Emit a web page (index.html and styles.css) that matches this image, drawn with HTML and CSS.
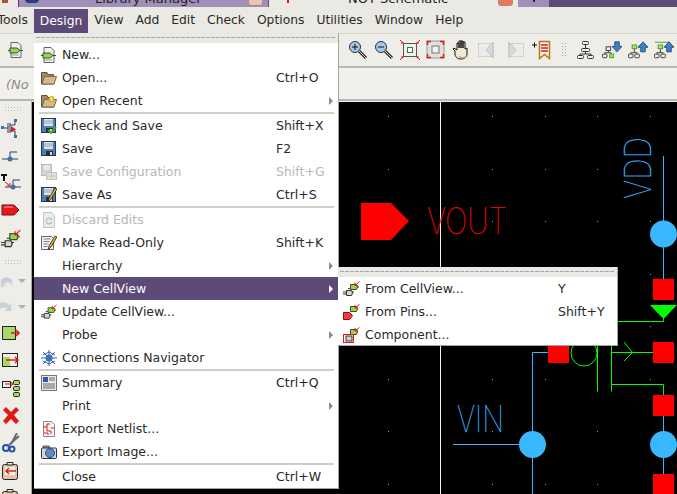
FILE: index.html
```html
<!DOCTYPE html>
<html lang="en">
<head>
    <meta charset="UTF-8">
    <meta name="viewport" content="width=device-width, initial-scale=1.0">
    <title>NOT Schematic</title>
    <link rel="stylesheet" href="styles.css">
</head>
<body>

<!-- Icon set -->
<svg class="icon-defs" width="0" height="0">
    <defs>
        <symbol id="i-cell" viewBox="0 0 16 16">
            <path d="M3 .5h7l3 3v12H3z" fill="#f2f2ee" stroke="#666"/>
            <path d="M2 6h7l3 2.5-3 2.5H2z" fill="#9ccf5c" stroke="#35581c"/>
            <path d="M0 8.500h2M12 8.500h3" stroke="#35581c"/>
            <path d="M3 13h8" stroke="#999"/>
        </symbol>
        <symbol id="i-folder" viewBox="0 0 16 16">
            <path d="M.5 2.500V14h12V4.500H7l-1-2z" fill="#a8875a" stroke="#5c5040"/>
            <path d="M1 14l2.500-7.500h12L13 14z" fill="#d8b98c" stroke="#7a6648"/>
        </symbol>
        <symbol id="i-folder-recent" viewBox="0 0 16 16">
            <use href="#i-folder"/>
            <circle cx="10.500" cy="6" r="2.500" fill="#f6e64a" stroke="#b8a020"/>
        </symbol>
        <symbol id="i-save" viewBox="0 0 16 16">
            <rect x=".5" y=".5" width="14" height="14" fill="#4f7fb8" stroke="#1f3a5c"/>
            <rect x="3" y="1" width="9" height="7" fill="#dfe3e6"/>
            <path d="M3 3h9M3 5h9" stroke="#9aa4ac"/>
            <rect x="5" y="10" width="7" height="5" fill="#2c2c2c"/>
            <rect x="9" y="11" width="2" height="3" fill="#ddd"/>
        </symbol>
        <symbol id="i-save-check" viewBox="0 0 16 16">
            <use href="#i-save"/>
            <path d="M7 12l3 3 5-6" fill="none" stroke="#3ea82c" stroke-width="2"/>
        </symbol>
        <symbol id="i-save-off" viewBox="0 0 16 16">
            <rect x=".5" y=".5" width="10" height="11" fill="#cfd4d8" stroke="#b4b8bc"/>
            <rect x="3" y="1" width="6" height="5" fill="#e8e8e8"/>
            <rect x="5.500" y="8.500" width="10" height="7" fill="#e6e4dc" stroke="#c4c2ba"/>
            <path d="M5.500 12h10M10.500 8.500v7" stroke="#c4c2ba"/>
        </symbol>
        <symbol id="i-save-as" viewBox="0 0 16 16">
            <use href="#i-save"/>
            <path d="M7 15l1-4 6-10 2 1-6 10z" fill="#f0b020" stroke="#222" stroke-width=".8"/>
        </symbol>
        <symbol id="i-discard" viewBox="0 0 16 16">
            <path d="M2.500.5h8l3 3v12h-11z" fill="#ecece8" stroke="#c4c4c0"/>
            <path d="M5 9a3 3 0 0 1 5-2l1 1M11 10a3 3 0 0 1-5 1l-1-1" fill="none" stroke="#a9bccc" stroke-width="1.200"/>
        </symbol>
        <symbol id="i-readonly" viewBox="0 0 16 16">
            <path d="M.5 1.500h10l2 2v11H.5z" fill="#f4f4f2" stroke="#667"/>
            <path d="M2.500 4h7M2.500 6.500h6M2.500 9h5M2.500 11.500h4" stroke="#6d84a8"/>
            <path d="M7 15l1-4 6-10 2 1-6 10z" fill="#f0b020" stroke="#222" stroke-width=".8"/>
        </symbol>
        <symbol id="i-plug" viewBox="0 0 17 16">
            <path d="M7.500 3.500h6l1 2.500-1 2.500h-6z" fill="#9ccf5c" stroke="#35581c"/>
            <path d="M14 6h2M5 7.500h2.500" stroke="#35581c"/>
            <path d="M3.500 9.500h5l1 2.500-1 2.500h-5z" fill="#d4d4d4" stroke="#333"/>
            <path d="M0 11h3.500M0 13h3.500M9 11h2" stroke="#333"/>
            <path d="M16.500.5l-4 3.500M12 1.500v3h3" fill="none" stroke="#e01818"/>
        </symbol>
        <symbol id="i-plug-pin" viewBox="0 0 17 16">
            <path d="M7.500 2.500h6l1 2.500-1 2.500h-6z" fill="#9ccf5c" stroke="#35581c"/>
            <path d="M16.500.5l-4 3M12 1v3h3" fill="none" stroke="#e01818"/>
            <path d="M.5 8.500h6l3 3-3 4h-6z" fill="#e84040" stroke="#a00"/>
        </symbol>
        <symbol id="i-plug-box" viewBox="0 0 17 16">
            <path d="M7.500 2.500h6l1 2.500-1 2.500h-6z" fill="#9ccf5c" stroke="#35581c"/>
            <path d="M16.500.5l-4 3M12 1v3h3" fill="none" stroke="#e01818"/>
            <rect x="3" y="9" width="6" height="5" fill="#d4d4d4" stroke="#333"/>
            <rect x=".5" y="7.500" width="10" height="8" fill="none" stroke="#e01818"/>
        </symbol>
        <symbol id="i-nav" viewBox="0 0 16 16">
            <path d="M8 0v16M0 8h16M2 2l12 12M14 2L2 14M2 5l6-3 6 3M2 11l6 3 6-3" fill="none" stroke="#3a5f9c"/>
            <circle cx="8" cy="8" r="3.500" fill="#3f6fc0"/>
        </symbol>
        <symbol id="i-summary" viewBox="0 0 16 16">
            <rect x=".5" y=".5" width="15" height="15" fill="#e8e8e4" stroke="#777"/>
            <rect x="2" y="2" width="5" height="5" fill="#2c5aa8"/>
            <path d="M8 3h6M8 5h6M2 9h12M2 11h12M2 13h12" stroke="#667"/>
        </symbol>
        <symbol id="i-netlist" viewBox="0 0 16 16">
            <path d="M2.500.5h8l3 3v12h-11z" fill="#f4f4f2" stroke="#888"/>
            <path d="M2 6h4V3h3M6 6v4h4M3 12h4v2M10 7h3M10 10v3" fill="none" stroke="#d82020"/>
        </symbol>
        <symbol id="i-camera" viewBox="0 0 16 16">
            <path d="M2 2h6l1 2H2z" fill="#aaa" stroke="#555"/>
            <rect x=".5" y="4" width="15" height="10.500" rx="1" fill="#d4d8dc" stroke="#333"/>
            <circle cx="9" cy="9" r="4.500" fill="#5c8cc8" stroke="#2c4a78"/>
        </symbol>
        <symbol id="i-zoom-in" viewBox="0 0 20 20">
            <path d="M11 11l7 7" stroke="#222" stroke-width="3"/>
            <path d="M11 11l7 7" stroke="#ddd"/>
            <circle cx="7" cy="7" r="5.500" fill="#a8c8e8" stroke="#234"/>
            <path d="M4 7h6M7 4v6" stroke="#111"/>
        </symbol>
        <symbol id="i-zoom-out" viewBox="0 0 20 20">
            <path d="M11 11l7 7" stroke="#222" stroke-width="3"/>
            <path d="M11 11l7 7" stroke="#ddd"/>
            <circle cx="7" cy="7" r="5.500" fill="#a8c8e8" stroke="#234"/>
            <path d="M4 7h6" stroke="#111"/>
        </symbol>
        <symbol id="i-fit" viewBox="0 0 20 20">
            <rect x="3.500" y="3.500" width="13" height="13" fill="#eee" stroke="#555"/>
            <rect x="7.500" y="7.500" width="5" height="5" fill="#fff" stroke="#3a7a1c"/>
            <path d="M0 0l4 4M20 0l-4 4M0 20l4-4M20 20l-4-4M1 3h3M16 3h3M1 17h3M16 17h3" stroke="#e01818"/>
        </symbol>
        <symbol id="i-fit-all" viewBox="0 0 20 20">
            <rect x="1" y="1" width="17" height="17" fill="#e0e0dc" stroke="#999"/>
            <rect x="6" y="6" width="7" height="7" fill="#f4f4f4" stroke="#777"/>
            <path d="M1.500 5V1.500H5M14 1.500h3.500V5M1.500 14v3.500H5M14 17.500h3.500V14" fill="none" stroke="#e01818" stroke-width="1.500"/>
        </symbol>
        <symbol id="i-hand" viewBox="0 0 20 20">
            <path d="M3 11l-2-2 1-1 3 2V3h2v5V1h2v7V1h2v7V2h2v7l2-1v5c0 4-2 6-6 6s-5-2-6-4z" fill="#f2ead8" stroke="#111"/>
            <path d="M6 15c3 3 7 3 10-1v2c-2 3-6 3-8 2z" fill="#b89c80"/>
        </symbol>
        <symbol id="i-prev" viewBox="0 0 20 20">
            <rect x=".5" y="3.500" width="15" height="13" fill="#ececea" stroke="#c4c4c0" stroke-dasharray="2 1"/>
            <path d="M8 10l7-8v16z" fill="#d4dae0" stroke="#c4c4c0"/>
        </symbol>
        <symbol id="i-next" viewBox="0 0 20 20">
            <rect x="4.500" y="3.500" width="15" height="13" fill="#ececea" stroke="#c4c4c0" stroke-dasharray="2 1"/>
            <path d="M12 10L5 2v16z" fill="#d4dae0" stroke="#c4c4c0"/>
        </symbol>
        <symbol id="i-bookmark" viewBox="0 0 20 20">
            <path d="M0 5h5M2.500 2.500v5" stroke="#111"/>
            <path d="M7.500 1.500h10v17l-5-4-5 4z" fill="#f4f0e8" stroke="#b87818" stroke-width="1.500"/>
            <path d="M9 5h7M9 8h7M9 11h7" stroke="#d82020" stroke-width="1.500"/>
        </symbol>
        <symbol id="i-hier" viewBox="0 0 20 20">
            <rect x="6.500" y="1.500" width="6" height="3" rx="1" fill="#eee" stroke="#333"/>
            <rect x="5.500" y="8.500" width="8" height="3" rx="1" fill="#eee" stroke="#333"/>
            <rect x="1.500" y="15.500" width="6" height="3" rx="1" fill="#eee" stroke="#333"/>
            <rect x="11.500" y="15.500" width="6" height="3" rx="1" fill="#eee" stroke="#333"/>
            <path d="M9.500 5v3M9.500 12v2M4 15v-1h11v1" fill="none" stroke="#333"/>
        </symbol>
        <symbol id="i-hier-down" viewBox="0 0 22 20">
            <rect x="4.500" y="6.500" width="5" height="4" fill="#eee" stroke="#333"/>
            <rect x=".5" y="14.500" width="5" height="4" rx="1" fill="#eee" stroke="#333"/>
            <rect x="8.500" y="14.500" width="4" height="4" fill="#b8e070" stroke="#4a9a1c"/>
            <path d="M7 11v2H3v1M7 13h3v1" fill="none" stroke="#333"/>
            <path d="M14 1h5v5h3l-5.500 6L11 6h3z" fill="#3f80c8" stroke="#1f4a7c"/>
        </symbol>
        <symbol id="i-hier-up" viewBox="0 0 22 20">
            <rect x="4.500" y="4.500" width="5" height="4" fill="#b8e070" stroke="#4a9a1c"/>
            <rect x=".5" y="14.500" width="5" height="4" rx="1" fill="#eee" stroke="#333"/>
            <rect x="7.500" y="14.500" width="5" height="4" rx="1" fill="#eee" stroke="#333"/>
            <path d="M7 9v4H3v1M7 13h3v1" fill="none" stroke="#333"/>
            <path d="M14 12h5V7h3L16.500 1 11 7h3z" fill="#3f80c8" stroke="#1f4a7c"/>
        </symbol>
        <symbol id="i-hier-top" viewBox="0 0 22 20">
            <path d="M1 1.500h16" stroke="#4a9a1c"/>
            <use href="#i-hier-up"/>
        </symbol>
        <symbol id="i-mos" viewBox="0 0 20 20">
            <path d="M1 9h6M7 4v10M9 4v10M9 6h5V1M9 12h5v5" fill="none" stroke="#23406c"/>
            <rect x="0" y="7" width="3" height="3" fill="#3f6fb0"/>
            <rect x="13" y="0" width="3" height="3" fill="#3f6fb0"/>
            <rect x="13" y="16" width="3" height="3" fill="#3f6fb0"/>
            <path d="M10 7l5 3.500-5 2.500z" fill="#e01818"/>
        </symbol>
        <symbol id="i-net" viewBox="0 0 20 20">
            <path d="M1 13h16M9 13V6h7" fill="none" stroke="#23406c"/>
            <circle cx="9" cy="13" r="2.500" fill="#3f6fb0"/>
        </symbol>
        <symbol id="i-net-label" viewBox="0 0 20 20">
            <path d="M4 13h16M12 13V6h7" fill="none" stroke="#23406c"/>
            <circle cx="12" cy="13" r="2.500" fill="#3f6fb0"/>
            <path d="M0 0h6v2H4v5H2V2H0z" fill="#111"/>
            <path d="M4 8l5 4M6 12h3V9" fill="none" stroke="#e01818"/>
        </symbol>
        <symbol id="i-pin" viewBox="0 0 20 20">
            <path d="M1 4h12l5 5-5 5H1z" fill="#e81818" stroke="#7a0c0c"/>
            <path d="M3 6h9" stroke="#f4a8a8"/>
        </symbol>
        <symbol id="i-undo" viewBox="0 0 16 16">
            <path d="M1 9c0-6 9-8 14-2v7c-3-6-8-5-10-2l3 1-7 3z" fill="#c8d0d8"/>
        </symbol>
        <symbol id="i-redo" viewBox="0 0 16 16">
            <path d="M0 3c5-2 10 0 11 3l3-2v9H6l3-3C7 8 3 8 0 10z" fill="#c8d0d8"/>
        </symbol>
        <symbol id="i-bus-out" viewBox="0 0 20 20">
            <rect x="1.500" y="3.500" width="13" height="13" fill="#a8d868" stroke="#222"/>
            <path d="M10 10h8M15 7l3 3-3 3" fill="none" stroke="#e01818" stroke-width="1.500"/>
        </symbol>
        <symbol id="i-bus-mid" viewBox="0 0 20 20">
            <rect x="1.500" y="2.500" width="15" height="13" fill="#f0f0e8" stroke="#222"/>
            <rect x="2" y="6" width="7" height="9" fill="#a8d868"/>
            <path d="M5 9h12M14 6l3 3-3 3" fill="none" stroke="#e01818" stroke-width="1.500"/>
        </symbol>
        <symbol id="i-tree" viewBox="0 0 20 20">
            <rect x="1.500" y="3.500" width="8" height="6" fill="#eee" stroke="#222"/>
            <rect x="12.500" y="2.500" width="6" height="4" rx="1" fill="#a8d868" stroke="#222"/>
            <rect x="12.500" y="8.500" width="6" height="4" rx="1" fill="#a8d868" stroke="#222"/>
            <rect x="12.500" y="14.500" width="6" height="4" rx="1" fill="#a8d868" stroke="#222"/>
            <path d="M4 6h7M9 3l3 3-3 3" fill="none" stroke="#e01818"/>
        </symbol>
        <symbol id="i-delete" viewBox="0 0 20 20">
            <path d="M2 4l3-3 5 5 5-5 3 3-5 5 5 6-3 3-5-5-5 5-3-3 5-6z" fill="#e01818"/>
        </symbol>
        <symbol id="i-cut" viewBox="0 0 20 20">
            <path d="M16 0l-6 11M18 3L8 12" stroke="#667" stroke-width="2"/>
            <circle cx="5" cy="15" r="3" fill="none" stroke="#2452a8" stroke-width="2"/>
            <circle cx="11" cy="16" r="2.500" fill="none" stroke="#2452a8" stroke-width="2"/>
        </symbol>
        <symbol id="i-paste" viewBox="0 0 20 20">
            <rect x="1.500" y="3.500" width="15" height="15" rx="2" fill="#e4c4a4" stroke="#222"/>
            <path d="M6 4V1.500h6V4z" fill="#eee" stroke="#222"/>
            <rect x="4" y="6" width="10" height="8" fill="#f4f4f0"/>
            <path d="M15 10H5M8 7l-3 3 3 3" fill="none" stroke="#e01818" stroke-width="1.500"/>
        </symbol>
    </defs>
</svg>

<!-- Window tabs behind the schematic window -->
<div class="task-strip">
    <div class="task task-first"><span class="task-mark"></span></div>
    <div class="task task-library">
        <span class="task-logo"></span>
        <span class="task-text">Library Manager</span>
        <span class="task-close"></span>
    </div>
    <div class="task task-schematic">
        <span class="task-tick"></span>
        <span class="task-text">NOT Schematic</span>
        <span class="task-close"></span>
    </div>
    <div class="task task-pager"><span class="task-pin"></span></div>
    <div class="task task-rest"></div>
</div>

<div class="menubar">
    <span class="menubar-item menubar-first">Tools</span>
    <span class="menubar-item menubar-open">Design</span>
    <span class="menubar-item">View</span>
    <span class="menubar-item">Add</span>
    <span class="menubar-item">Edit</span>
    <span class="menubar-item">Check</span>
    <span class="menubar-item">Options</span>
    <span class="menubar-item">Utilities</span>
    <span class="menubar-item">Window</span>
    <span class="menubar-item">Help</span>
</div>

<div class="toolbar">
    <svg class="tb-first"><use href="#i-cell"/></svg>
    <div class="tb-group">
        <span class="tb-btn"><svg><use href="#i-zoom-in"/></svg></span>
        <span class="tb-btn"><svg><use href="#i-zoom-out"/></svg></span>
        <span class="tb-btn"><svg><use href="#i-fit"/></svg></span>
        <span class="tb-btn"><svg><use href="#i-fit-all"/></svg></span>
        <span class="tb-btn"><svg><use href="#i-hand"/></svg></span>
        <span class="tb-btn"><svg><use href="#i-prev"/></svg></span>
        <span class="tb-btn"><svg><use href="#i-next"/></svg></span>
        <span class="tb-btn tb-bookmark"><svg><use href="#i-bookmark"/></svg></span>
        <span class="tb-sep"></span>
        <span class="tb-btn"><svg><use href="#i-hier"/></svg></span>
        <span class="tb-btn"><svg><use href="#i-hier-down"/></svg></span>
        <span class="tb-btn"><svg><use href="#i-hier-up"/></svg></span>
        <span class="tb-btn"><svg><use href="#i-hier-top"/></svg></span>
    </div>
</div>

<div class="infobar"><em>(No</em></div>

<div class="main">
    <div class="sidebar">
        <div class="grip"></div>
        <span class="tool"><svg><use href="#i-mos"/></svg></span>
        <span class="tool"><svg><use href="#i-net"/></svg></span>
        <span class="tool"><svg><use href="#i-net-label"/></svg></span>
        <span class="tool"><svg><use href="#i-pin"/></svg></span>
        <span class="tool"><svg><use href="#i-plug"/></svg></span>
        <div class="grip grip-mid"></div>
        <span class="tool tool-history"><svg class="tool-undo"><use href="#i-undo"/></svg><i class="tool-drop"></i></span>
        <span class="tool tool-history"><svg class="tool-undo"><use href="#i-redo"/></svg><i class="tool-drop"></i></span>
        <span class="tool"><svg><use href="#i-bus-out"/></svg></span>
        <span class="tool"><svg><use href="#i-bus-mid"/></svg></span>
        <span class="tool"><svg><use href="#i-tree"/></svg></span>
        <span class="tool"><svg><use href="#i-delete"/></svg></span>
        <span class="tool"><svg><use href="#i-cut"/></svg></span>
        <span class="tool"><svg><use href="#i-paste"/></svg></span>
        <span class="tool"><svg><use href="#i-paste"/></svg></span>
    </div>

    <!-- Schematic canvas, viewBox uses window coordinates -->
    <div class="canvas">
        <svg class="schematic" viewBox="32 100 645 394" width="645" height="394">
            <path class="sch-frame" d="M32 100.500H677M440.500 100V494"/>
            <g class="sch-grid">
                <rect x="388" y="115" width="1" height="1"/><rect x="492" y="115" width="1" height="1"/><rect x="545" y="115" width="1" height="1"/><rect x="597" y="115" width="1" height="1"/><rect x="650" y="115" width="1" height="1"/>
                <rect x="388" y="168" width="1" height="1"/><rect x="492" y="168" width="1" height="1"/><rect x="545" y="168" width="1" height="1"/><rect x="597" y="168" width="1" height="1"/><rect x="650" y="168" width="1" height="1"/>
                <rect x="388" y="220" width="1" height="1"/><rect x="492" y="220" width="1" height="1"/><rect x="545" y="220" width="1" height="1"/><rect x="597" y="220" width="1" height="1"/><rect x="650" y="220" width="1" height="1"/>
                <rect x="650" y="273" width="1" height="1"/><rect x="650" y="325" width="1" height="1"/>
                <rect x="388" y="378" width="1" height="1"/><rect x="492" y="378" width="1" height="1"/><rect x="545" y="378" width="1" height="1"/><rect x="650" y="378" width="1" height="1"/>
                <rect x="388" y="430" width="1" height="1"/><rect x="492" y="430" width="1" height="1"/><rect x="597" y="430" width="1" height="1"/>
                <rect x="388" y="483" width="1" height="1"/><rect x="492" y="483" width="1" height="1"/><rect x="545" y="483" width="1" height="1"/><rect x="597" y="483" width="1" height="1"/>
            </g>

            <path class="sch-blue" d="M663.500 155V278M663.500 415V473M532.500 494V351.500H548M453 443.500H519"/>
            <path class="sch-green" d="M617 320.500H663.500V316M611 351.500H653M624 341L632.500 351.500L624 360M597.500 345V390.500M611.500 345V390.500M611.500 383.500H663.500V394"/>
            <circle class="sch-green" cx="584" cy="352" r="13"/>

            <g class="sch-red">
                <path d="M361 202H391L409 220L391 239H361Z"/>
                <rect x="653" y="278" width="21" height="21"/>
                <rect x="653" y="341" width="21" height="21"/>
                <rect x="653" y="394" width="21" height="21"/>
                <rect x="653" y="473" width="21" height="21"/>
                <rect x="548" y="341" width="21" height="21"/>
            </g>
            <path class="sch-green-fill" d="M650 304H677L663.500 318Z"/>
            <g class="sch-blue-fill">
                <circle cx="663.500" cy="233" r="13.500"/>
                <circle cx="663.500" cy="443.500" r="13.500"/>
                <circle cx="532.500" cy="443.500" r="13.500"/>
            </g>

            <text class="sch-label sch-label-red" x="427" y="233" textLength="80" lengthAdjust="spacingAndGlyphs">VOUT</text>
            <text class="sch-label sch-label-blue" x="457" y="431" textLength="47" lengthAdjust="spacingAndGlyphs">VIN</text>
            <text class="sch-label sch-label-blue" transform="translate(651 198) rotate(-90)" textLength="62" lengthAdjust="spacingAndGlyphs">VDD</text>
        </svg>
    </div>
</div>

<!-- Design menu -->
<div class="menu menu-design">
    <div class="tearoff"></div>
    <div class="item"><svg class="icon"><use href="#i-cell"/></svg><span>New...</span></div>
    <div class="item"><svg class="icon"><use href="#i-folder"/></svg><span>Open...</span><span class="keys">Ctrl+O</span></div>
    <div class="item"><svg class="icon"><use href="#i-folder-recent"/></svg><span>Open Recent</span><i class="arrow"></i></div>
    <div class="sep"></div>
    <div class="item"><svg class="icon"><use href="#i-save-check"/></svg><span>Check and Save</span><span class="keys">Shift+X</span></div>
    <div class="item"><svg class="icon"><use href="#i-save"/></svg><span>Save</span><span class="keys">F2</span></div>
    <div class="item item-off"><svg class="icon"><use href="#i-save-off"/></svg><span>Save Configuration</span><span class="keys">Shift+G</span></div>
    <div class="item"><svg class="icon"><use href="#i-save-as"/></svg><span>Save As</span><span class="keys">Ctrl+S</span></div>
    <div class="sep"></div>
    <div class="item item-off"><svg class="icon"><use href="#i-discard"/></svg><span>Discard Edits</span></div>
    <div class="item"><svg class="icon"><use href="#i-readonly"/></svg><span>Make Read-Only</span><span class="keys">Shift+K</span></div>
    <div class="item"><span class="icon"></span><span>Hierarchy</span><i class="arrow"></i></div>
    <div class="item item-active"><span class="icon"></span><span>New CellView</span><i class="arrow"></i></div>
    <div class="item"><svg class="icon"><use href="#i-plug"/></svg><span>Update CellView...</span></div>
    <div class="item"><span class="icon"></span><span>Probe</span><i class="arrow"></i></div>
    <div class="item"><svg class="icon"><use href="#i-nav"/></svg><span>Connections Navigator</span></div>
    <div class="sep"></div>
    <div class="item"><svg class="icon"><use href="#i-summary"/></svg><span>Summary</span><span class="keys">Ctrl+Q</span></div>
    <div class="item"><span class="icon"></span><span>Print</span><i class="arrow"></i></div>
    <div class="item"><svg class="icon"><use href="#i-netlist"/></svg><span>Export Netlist...</span></div>
    <div class="item"><svg class="icon"><use href="#i-camera"/></svg><span>Export Image...</span></div>
    <div class="sep"></div>
    <div class="item"><span class="icon"></span><span>Close</span><span class="keys">Ctrl+W</span></div>
</div>

<!-- New CellView submenu -->
<div class="menu menu-sub">
    <div class="tearoff"></div>
    <div class="item"><svg class="icon"><use href="#i-plug"/></svg><span>From CellView...</span><span class="keys">Y</span></div>
    <div class="item"><svg class="icon"><use href="#i-plug-pin"/></svg><span>From Pins...</span><span class="keys">Shift+Y</span></div>
    <div class="item"><svg class="icon"><use href="#i-plug-box"/></svg><span>Component...</span></div>
</div>

</body>
</html>
```

FILE: styles.css
```css
body {
    font-family: "DejaVu Sans", sans-serif;
    font-size: 12.5px;
    color: #2a2a2a;
    margin: 0;
    width: 677px;
    height: 494px;
    overflow: hidden;
    position: relative;
    display: flex;
    flex-direction: column;
    background-color: #efede7;
}

.icon-defs {
    position: absolute;
}

/* Window tabs */
.task-strip {
    display: flex;
    height: 7px;
    flex-shrink: 0;
    overflow: hidden;
}

.task {
    position: relative;
    height: 7px;
    overflow: hidden;
}

.task-first {
    width: 18px;
    background-color: #ebe9e3;
    border-right: 1px solid #4a3a5c;
}

.task-mark {
    position: absolute;
    left: 2px;
    top: 0;
    width: 6px;
    height: 3px;
    background-color: #b0502c;
}

.task-library {
    width: 249px;
    background-color: #a08fb8;
    border-right: 1px solid #5c4a78;
}

.task-schematic {
    width: 249px;
    background-color: #ebe9e3;
}

.task-pager {
    width: 31px;
    background-color: #a08fb8;
}

.task-rest {
    flex: 1;
    background-color: #5c4a78;
}

.task-text {
    position: absolute;
    top: -9px;
    font-size: 13px;
    color: #222;
    white-space: nowrap;
}

.task-library .task-text {
    left: 76px;
}

.task-schematic .task-text {
    left: 79px;
}

.task-logo {
    position: absolute;
    left: 6px;
    top: -1px;
    width: 14px;
    height: 4px;
    border-radius: 0 0 4px 4px;
    background-color: #2a3a7c;
}

.task-close {
    position: absolute;
    top: -2px;
    width: 13px;
    height: 6px;
    border-radius: 0 0 3px 3px;
    background-color: #ecc4b8;
    border: 1px solid #b08878;
}

.task-library .task-close {
    left: 229px;
}

.task-schematic .task-close {
    left: 229px;
    background-color: #e87a5c;
}

.task-tick {
    position: absolute;
    left: 18px;
    top: 0;
    width: 2px;
    height: 3px;
    background-color: #d01818;
}

.task-pin {
    position: absolute;
    left: 15px;
    top: 0;
    width: 2px;
    height: 2px;
    background-color: #222;
}

/* Menu bar */
.menubar {
    display: flex;
    height: 25px;
    flex-shrink: 0;
    padding-bottom: 1px;
    font-size: 12.3px;
    background-color: #ebe9e3;
    border-bottom: 1px solid #d4d2cc;
}

.menubar-item {
    padding: 0 6px;
    line-height: 25px;
    margin-top: 1px;
}

.menubar-first {
    margin-left: -8.5px;
}

.menubar-open {
    background-color: #5c4a78;
    color: #fff;
    height: 24px;
    line-height: 24px;
    margin-top: 2px;
}

/* Top toolbars */
.toolbar {
    display: flex;
    align-items: center;
    height: 32px;
    flex-shrink: 0;
    background-color: #efede7;
    border-bottom: 2px solid #bab8b2;
}

.tb-first {
    width: 16px;
    height: 16px;
    margin-left: 8px;
}

.tb-group {
    display: flex;
    align-items: center;
    margin-left: auto;
}

.tb-btn {
    display: flex;
    align-items: center;
    justify-content: center;
    width: 26px;
    height: 32px;
}

.tb-btn svg {
    width: 20px;
    height: 20px;
}

.tb-bookmark {
    margin-left: 2px;
}

.tb-sep {
    width: 18px;
    height: 16px;
    background-image: radial-gradient(#aaa 0.9px, transparent 1px);
    background-size: 3px 3px;
    background-clip: content-box;
    padding: 0 7px;
    box-sizing: border-box;
}

.infobar {
    height: 31px;
    flex-shrink: 0;
    padding-left: 6px;
    line-height: 33px;
    font-size: 13px;
    color: #8a8a88;
    white-space: nowrap;
    background-color: #f2f0ea;
    border-bottom: 2px solid #b8b6b0;
}

/* Tool column and canvas */
.main {
    display: flex;
    flex: 1;
    min-height: 0;
}

.sidebar {
    display: flex;
    flex-direction: column;
    flex-shrink: 0;
    width: 32px;
    padding-left: 1px;
    box-sizing: border-box;
    overflow: hidden;
    background-color: #efede7;
    border-right: 1px solid #a8a6a0;
}

.grip {
    width: 17px;
    height: 5px;
    margin: 5px 0 4px 3px;
    background-image: radial-gradient(#bbb 0.7px, transparent 0.8px);
    background-size: 3px 3px;
    flex-shrink: 0;
}

.grip-mid {
    margin: 6px 0 4px 3px;
}

.tool {
    display: flex;
    align-items: center;
    justify-content: center;
    flex-shrink: 0;
    width: 20px;
    height: 27.5px;
}

.tool svg {
    width: 20px;
    height: 20px;
}

.tool-history {
    height: 26px;
    width: 26px;
    justify-content: flex-start;
    margin-left: -1px;
}

.tool .tool-undo {
    width: 13px;
    height: 16px;
}

.tool-drop {
    width: 0;
    height: 0;
    margin-left: 5px;
    border-left: 4px solid transparent;
    border-right: 4px solid transparent;
    border-top: 4px solid #b0b0ac;
}

.canvas {
    flex: 1;
    overflow: hidden;
    background-color: #000;
}

.schematic {
    display: block;
}

.sch-frame {
    fill: none;
    stroke: #f0f0f0;
    stroke-width: 1;
}

.sch-grid {
    fill: #8a9aaa;
}

.sch-blue {
    fill: none;
    stroke: #3ab8ff;
    stroke-width: 1;
}

.sch-blue-fill {
    fill: #3ab8ff;
}

.sch-green {
    fill: none;
    stroke: #00ff00;
    stroke-width: 1;
}

.sch-green-fill {
    fill: #00ff00;
}

.sch-red {
    fill: #ff0000;
}

.sch-label {
    font-family: Inter, "Liberation Sans", sans-serif;
    font-weight: 100;
    font-size: 36px;
    stroke-width: 0.25;
}

.sch-label-red {
    fill: #ff0000;
    stroke: #ff0000;
}

.sch-label-blue {
    fill: #3ab8ff;
    stroke: #3ab8ff;
}

/* Menus */
.menu {
    position: absolute;
    background-color: #fff;
    box-sizing: border-box;
    border-right: 1px solid #a4a4a0;
    border-bottom: 1px solid #a4a4a0;
}

.menu-design {
    left: 34px;
    top: 33px;
    width: 305px;
    height: 456px;
}

.menu-sub {
    left: 338px;
    top: 267px;
    width: 280px;
    height: 79px;
}

.tearoff {
    height: 10px;
    box-sizing: border-box;
    padding: 4px 2px 0;
    background-color: #ebe9e3;
}

.tearoff::before {
    content: "";
    display: block;
    height: 1px;
    background-image: linear-gradient(to right, #a8a8a4 4px, transparent 4px);
    background-size: 5px 1px;
}

.item {
    display: grid;
    align-items: center;
    height: 23px;
    padding: 0 5px 0 7px;
    white-space: nowrap;
}

.menu-design .item {
    grid-template-columns: 16px 209px 1fr;
    column-gap: 5px;
}

.menu-sub .item {
    grid-template-columns: 17px 188px 1fr;
    column-gap: 5px;
    padding-left: 5px;
}

.icon {
    display: block;
    width: 16px;
    height: 16px;
}

.menu-sub .icon {
    width: 17px;
}

.keys {
    grid-column: 3;
}

.arrow {
    grid-column: 3;
    justify-self: end;
    width: 0;
    height: 0;
    border-top: 4px solid transparent;
    border-bottom: 4px solid transparent;
    border-left: 4px solid #8a8a88;
}

.item-off {
    color: #b8b8b4;
}

.item-active {
    background-color: #5c4a78;
    color: #fff;
}

.item-active .arrow {
    border-left-color: #fff;
}

.sep {
    height: 2px;
    margin: 0 4px 0 5px;
    background-color: #cfcfca;
}
```
